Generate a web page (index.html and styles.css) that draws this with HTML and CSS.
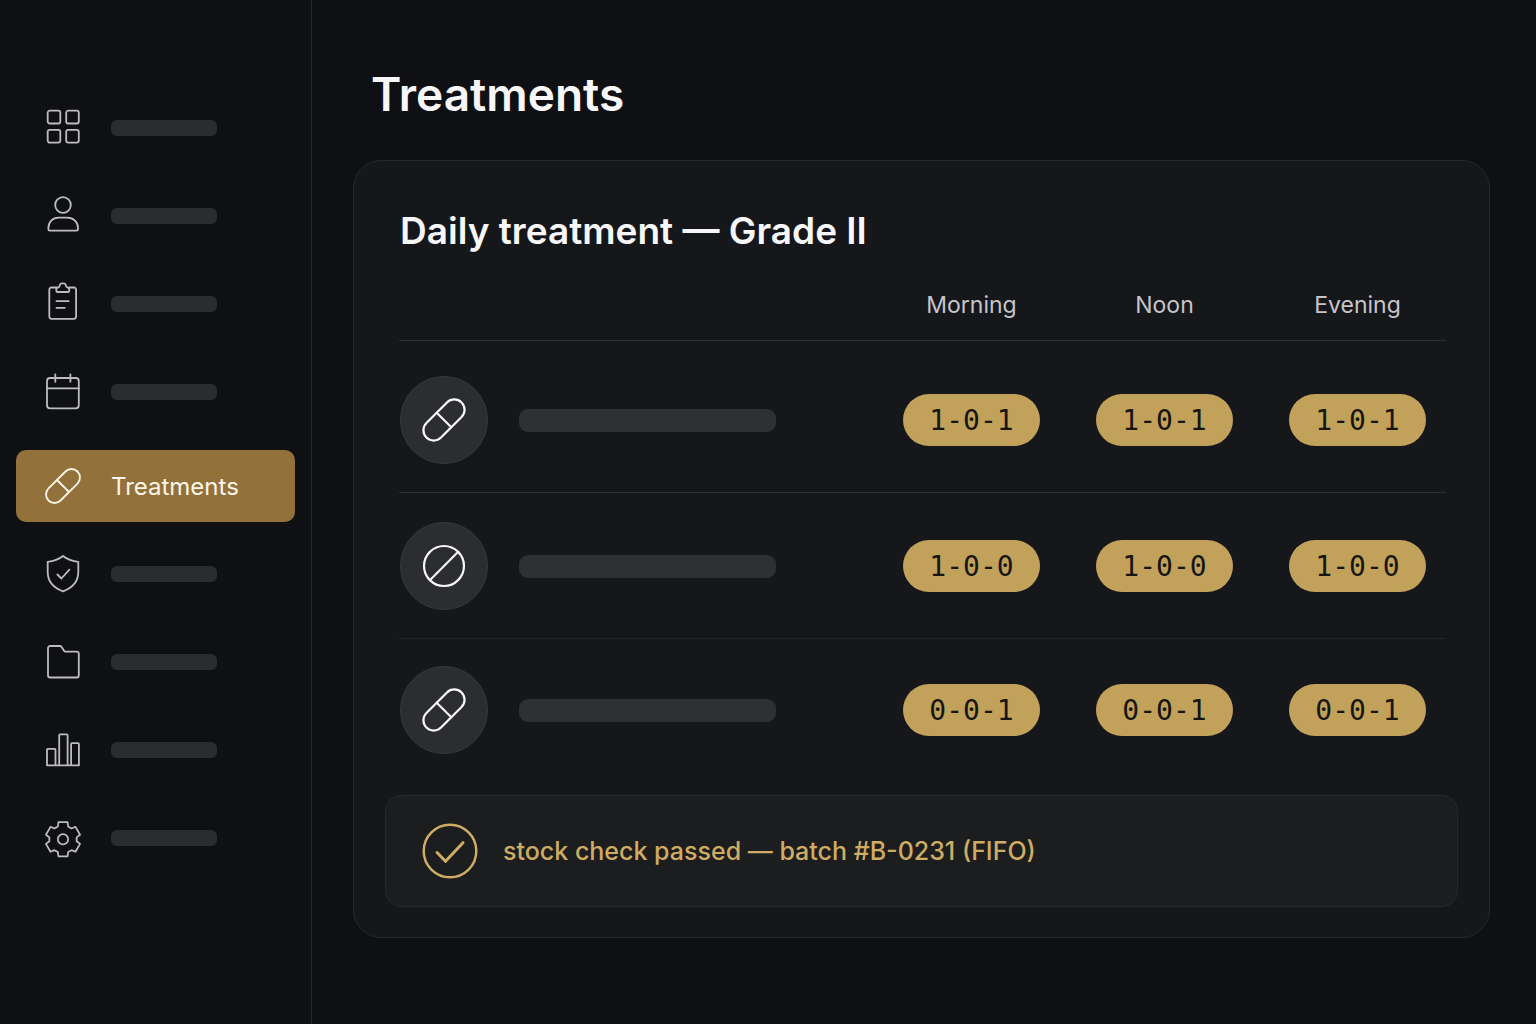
FILE: index.html
```html
<!DOCTYPE html>
<html lang="en">
<head>
<meta charset="utf-8">
<meta name="viewport" content="width=device-width, initial-scale=1">
<title>Treatments</title>
<link rel="stylesheet" href="styles.css">
</head>
<body>
<svg class="sprite" aria-hidden="true">
  <symbol id="capsule" viewBox="0 0 38 38">
    <g transform="translate(19 19) rotate(-45)">
      <rect x="-20.5" y="-8.5" width="41" height="17" rx="8.5"/>
      <path d="M0-8.5v17"/>
    </g>
  </symbol>
  <symbol id="tablet" viewBox="0 0 38 38">
    <circle cx="19" cy="19" r="16.5"/>
    <path d="M7.3 30.7 30.7 7.3"/>
  </symbol>
</svg>
<div class="app">
  <nav class="sidebar" aria-label="Main">
    <a class="nav-item" href="#" aria-label="Dashboard">
      <svg class="nav-icon" viewBox="0 0 38 38"><rect x="3.7" y="1.7" width="12.6" height="12.8" rx="2"/><rect x="22.2" y="1.7" width="12.6" height="12.8" rx="2"/><rect x="3.7" y="20.8" width="12.6" height="12.8" rx="2"/><rect x="22.2" y="20.8" width="12.6" height="12.8" rx="2"/></svg>
      <span class="nav-bar"></span>
    </a>
    <a class="nav-item" href="#" aria-label="Patients">
      <svg class="nav-icon" viewBox="0 0 38 38"><circle cx="19" cy="8" r="7.8"/><path d="M6 33.700h26.400a1.600 1.600 0 0 0 1.600-1.600V31c0-6-4.600-10.300-10.600-10.300h-8.800C8.600 20.700 4.400 25 4.400 31v1.100A1.600 1.600 0 0 0 6 33.700z"/></svg>
      <span class="nav-bar"></span>
    </a>
    <a class="nav-item" href="#" aria-label="Records">
      <svg class="nav-icon" viewBox="0 0 38 38"><path d="M12.300 2.500H7.500a2.200 2.200 0 0 0-2.200 2.200v26.900a2.200 2.200 0 0 0 2.200 2.200h22.400a2.200 2.200 0 0 0 2.200-2.200V4.700a2.200 2.200 0 0 0-2.200-2.200h-4.700"/><path d="M12.300 4.300c0-1.100.7-1.800 1.700-1.800.9 0 1.300-.5 1.500-1.400C15.900-.9 16.400-1.700 17.700-1.700h2.200c1.300 0 1.800.8 2.200 2.800.2.900.6 1.400 1.500 1.400 1 0 1.600.7 1.600 1.800v1.400c0 .8-.5 1.300-1.300 1.300H13.600c-.8 0-1.300-.5-1.300-1.300z"/><path d="M12.500 16.200h12.200M12.500 22.800h8.300"/></svg>
      <span class="nav-bar"></span>
    </a>
    <a class="nav-item" href="#" aria-label="Calendar">
      <svg class="nav-icon" viewBox="0 0 38 38"><rect x="3" y="5" width="31.800" height="30.300" rx="3"/><path d="M3 15.300h31.800M11.300 1.400v7.400M26.400 1.400v7.400"/></svg>
      <span class="nav-bar"></span>
    </a>
    <a class="nav-item is-active" href="#" aria-current="page">
      <svg class="nav-icon"><use href="#capsule"/></svg>
      <span>Treatments</span>
    </a>
    <a class="nav-item" href="#" aria-label="Safety">
      <svg class="nav-icon" viewBox="0 0 38 38"><path d="M19 1C14.600 4.500 9.600 6.300 3.700 6.800V17c0 9 5.300 15.600 15.300 19.300C29 32.600 34.300 26 34.300 17V6.800C28.400 6.300 23.400 4.500 19 1z"/><path d="m13.400 19.500 4 4 8-8.800"/></svg>
      <span class="nav-bar"></span>
    </a>
    <a class="nav-item" href="#" aria-label="Files">
      <svg class="nav-icon" viewBox="0 0 38 38"><path d="M6.300 3H16c.8 0 1.200.3 1.600.9l2.600 4.100c.3.500.7.700 1.300.7h11a2.300 2.300 0 0 1 2.300 2.300v21.200a2.300 2.300 0 0 1-2.300 2.300H6.300A2.300 2.300 0 0 1 4 32.200V5.300A2.300 2.300 0 0 1 6.300 3z"/></svg>
      <span class="nav-bar"></span>
    </a>
    <a class="nav-item" href="#" aria-label="Reports">
      <svg class="nav-icon" viewBox="0 0 38 38"><path d="M3 34.300V18.700c0-.6.300-.9.900-.9h6.700c.6 0 .9.300.9.900v15.600M15.200 34.300V4.300c0-.6.300-.9.900-.9h6.600c.6 0 .9.300.9.900v30M27.100 34.300V13c0-.6.300-.9.900-.9h6c.6 0 .9.300.9.900v21.300zM3 34.300h32"/></svg>
      <span class="nav-bar"></span>
    </a>
    <a class="nav-item" href="#" aria-label="Settings">
      <svg class="nav-icon" viewBox="0 0 38 38"><g transform="translate(19 20.300) scale(.97)"><path d="M-4.700-17.600h9.400l.6 4.400 3.480 2.010 4.110-1.680 4.700 8.140-3.510 2.720v4.020l3.510 2.720-4.700 8.140-4.110-1.680-3.480 2.010-.6 4.400h-9.400l-.6-4.400-3.480-2.010-4.110 1.680-4.700-8.140 3.510-2.720v-4.020l-3.510-2.720 4.700-8.140 4.110 1.680 3.480-2.010z"/><circle r="5.300"/></g></svg>
      <span class="nav-bar"></span>
    </a>
  </nav>

  <main class="main">
    <h1 class="page-title">Treatments</h1>
    <section class="card" aria-labelledby="plan-title">
      <h2 class="card-title" id="plan-title">Daily treatment — Grade II</h2>
      <div class="table-wrap">
        <table class="plan">
          <thead>
            <tr><td></td><th class="slot" scope="col">Morning</th><th class="slot" scope="col">Noon</th><th class="slot" scope="col">Evening</th></tr>
          </thead>
          <tbody>
            <tr>
              <td><div class="medicine"><span class="badge"><svg class="badge-icon"><use href="#capsule"/></svg></span><span class="medicine-bar"></span></div></td>
              <td class="slot"><span class="dose">1-0-1</span></td><td class="slot"><span class="dose">1-0-1</span></td><td class="slot"><span class="dose">1-0-1</span></td>
            </tr>
            <tr>
              <td><div class="medicine"><span class="badge"><svg class="badge-icon"><use href="#tablet"/></svg></span><span class="medicine-bar"></span></div></td>
              <td class="slot"><span class="dose">1-0-0</span></td><td class="slot"><span class="dose">1-0-0</span></td><td class="slot"><span class="dose">1-0-0</span></td>
            </tr>
            <tr>
              <td><div class="medicine"><span class="badge"><svg class="badge-icon"><use href="#capsule"/></svg></span><span class="medicine-bar"></span></div></td>
              <td class="slot"><span class="dose">0-0-1</span></td><td class="slot"><span class="dose">0-0-1</span></td><td class="slot"><span class="dose">0-0-1</span></td>
            </tr>
          </tbody>
        </table>
      </div>
      <p class="note">
        <svg class="note-icon" viewBox="0 0 56 56" aria-hidden="true"><circle cx="28" cy="28" r="26.300"/><path class="note-tick" d="m15 29.500 8.500 8.800 17.500-18.600"/></svg>
        <span>stock check passed — batch #B-0231 (FIFO)</span>
      </p>
    </section>
  </main>
</div>
</body>
</html>
```
FILE: styles.css
```css
* {
  box-sizing: border-box;
}

body {
  margin: 0;
  background: #0f1013;
  color: #f7f7f9;
  font-family: Inter, "Liberation Sans", sans-serif;
}

svg {
  fill: none;
  stroke: currentColor;
  stroke-linecap: round;
  stroke-linejoin: round;
  overflow: visible;
}

.sprite {
  position: absolute;
  width: 0;
  height: 0;
}

.app {
  display: flex;
  min-height: 100vh;
}

/* Sidebar */

.sidebar {
  display: flex;
  flex-direction: column;
  flex: none;
  gap: 16px;
  width: 312px;
  padding: 92px 16px 32px;
  border-right: 1px solid #26272a;
}

.nav-item {
  display: flex;
  align-items: center;
  gap: 29px;
  height: 72px;
  padding: 0 28px;
  border-radius: 10px;
  color: #bdbdc0;
  font-size: 24px;
  text-decoration: none;
}

.nav-item.is-active {
  margin-top: 6px;
  background: #92713a;
  color: #fdf6ea;
}

.nav-icon {
  flex: none;
  width: 38px;
  height: 38px;
  stroke-width: 1.8;
}

.nav-bar {
  width: 106px;
  height: 16px;
  border-radius: 6px;
  background: #2b2c2e;
}

/* Content */

.main {
  flex: 1;
  min-width: 0;
  padding: 64px 46px 64px 41px;
}

.page-title {
  margin: 0;
  padding: 0 18px 36px;
  font-size: 46px;
  font-weight: 600;
  line-height: 60px;
}

.card {
  padding: 46px 31px 30px;
  border: 1px solid #27282b;
  border-radius: 28px;
  background: #16171a;
}

.card-title {
  margin: 0;
  padding: 0 15px 22px;
  font-size: 37px;
  font-weight: 600;
  line-height: 48px;
}

.table-wrap {
  padding: 0 12px 0 14px;
}

.plan {
  width: 100%;
  border-collapse: separate;
  border-spacing: 0;
}

.plan td,
.plan th {
  padding: 29px 0 28px;
  border-bottom: 1px solid #2d2e31;
  vertical-align: middle;
}

.plan thead td,
.plan thead th {
  height: 64px;
  padding-top: 0;
  padding-bottom: 8px;
  color: #c6c6c9;
  font-size: 23px;
  font-weight: 400;
}

.plan tbody tr:first-child td {
  padding-top: 35px;
}

.plan tbody tr:nth-child(2) td {
  border-bottom-color: #242528;
}

.plan tbody tr:last-child td {
  padding-top: 27px;
  padding-bottom: 41px;
  border-bottom: 0;
}

.plan .slot {
  width: 193px;
  padding-right: 20px;
  padding-left: 36px;
  text-align: center;
}

.medicine {
  display: flex;
  align-items: center;
  gap: 31px;
  padding-left: 1px;
}

.badge {
  display: grid;
  flex: none;
  place-items: center;
  width: 88px;
  height: 88px;
  border: 1px solid #38393b;
  border-radius: 50%;
  background: #2c2d2f;
}

.badge-icon {
  width: 46px;
  height: 46px;
  stroke-width: 1.8;
}

.medicine-bar {
  width: 257px;
  height: 23px;
  border-radius: 9px;
  background: #2f3032;
}

.dose {
  display: block;
  height: 52px;
  border-radius: 26px;
  background: #c2a15b;
  color: #17150f;
  font-family: "DejaVu Sans Mono", monospace;
  font-size: 28px;
  line-height: 54px;
}

.note {
  display: flex;
  align-items: center;
  gap: 25px;
  min-height: 112px;
  margin: 0;
  padding: 0 36px;
  border: 1px solid #27282a;
  border-radius: 16px;
  background: #1c1d1f;
  color: #cfac63;
  font-size: 25px;
  font-weight: 500;
}

.note-icon {
  flex: none;
  width: 56px;
  height: 56px;
  stroke-width: 2.5;
}

.note-tick {
  stroke-width: 3;
}
```
